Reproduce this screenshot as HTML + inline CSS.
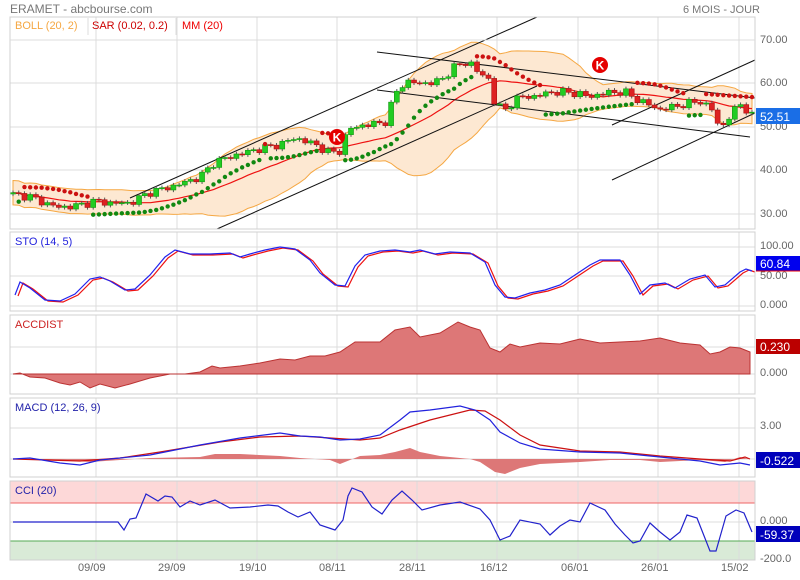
<!DOCTYPE html>
<html><head><meta charset="utf-8"><style>
body{margin:0;background:#fff;width:800px;height:580px;overflow:hidden;font-family:"Liberation Sans",sans-serif}
svg{display:block}
text{font-family:"Liberation Sans",sans-serif}
</style></head><body>
<svg id="s" width="800" height="580" xmlns="http://www.w3.org/2000/svg">
<g id="grid" stroke="#dcdcdc" stroke-width="1" fill="none"></g>
<g id="main"></g>
<g id="sub"></g>
<g id="frames" fill="none" stroke="#d0d0d0"></g>
<text x="10" y="13" font-size="12" fill="#777">ERAMET - abcbourse.com</text>
<text x="683" y="13" font-size="11" fill="#777">6 MOIS - JOUR</text>
<text x="15" y="29" font-size="11" fill="#f5a742">BOLL (20, 2)</text>
<text x="92" y="29" font-size="11" fill="#cc0000">SAR (0.02, 0.2)</text>
<text x="182" y="29" font-size="11" fill="#ee0000">MM (20)</text>
<line x1="88" y1="18" x2="88" y2="35" stroke="#ddd"/><line x1="176" y1="18" x2="176" y2="35" stroke="#ddd"/><line x1="10" y1="40" x2="755" y2="40" stroke="#ddd"/>
<g font-size="11" fill="#666">
<text x="760" y="43">70.00</text><text x="760" y="86">60.00</text><text x="760" y="130">50.00</text><text x="760" y="173">40.00</text><text x="760" y="217">30.00</text>
<text x="760" y="249">100.00</text><text x="760" y="279">50.00</text><text x="760" y="308">0.000</text>
<text x="760" y="376">0.000</text>
<text x="760" y="429">3.00</text>
<text x="760" y="524">0.000</text><text x="760" y="562">-200.0</text>
<text x="78" y="571">09/09</text><text x="158" y="571">29/09</text><text x="239" y="571">19/10</text><text x="319" y="571">08/11</text><text x="399" y="571">28/11</text><text x="480" y="571">16/12</text><text x="561" y="571">06/01</text><text x="641" y="571">26/01</text><text x="721" y="571">15/02</text>
</g>
<text x="15" y="245" font-size="11" fill="#2222dd">STO (14, 5)</text>
<text x="15" y="328" font-size="11" fill="#cc2222">ACCDIST</text>
<text x="15" y="411" font-size="11" fill="#2222aa">MACD (12, 26, 9)</text>
<text x="15" y="494" font-size="11" fill="#2222aa">CCI (20)</text>
<rect x="756" y="108" width="44" height="16" fill="#1a6ee6"/><text x="760" y="121" font-size="12" fill="#fff">52.51</text>
<rect x="756" y="256" width="44" height="15" fill="#0000ee"/><line x1="756" y1="271" x2="800" y2="271" stroke="#e00"/><text x="760" y="268" font-size="12" fill="#fff">60.84</text>
<rect x="756" y="339" width="44" height="15" fill="#bb0000"/><text x="760" y="351" font-size="12" fill="#fff">0.230</text>
<rect x="756" y="452" width="44" height="16" fill="#0000bb"/><text x="760" y="465" font-size="12" fill="#fff">-0.522</text>
<rect x="756" y="526" width="44" height="16" fill="#0000bb"/><text x="760" y="539" font-size="12" fill="#fff">-59.37</text>
<g id="top"></g>
</svg>
<script>
var NS="http://www.w3.org/2000/svg";
function el(p,t,a){var e=document.createElementNS(NS,t);for(var k in a)e.setAttribute(k,a[k]);document.getElementById(p).appendChild(e);return e;}
var VX=[96,177,257,337,417,497,578,658,739];
var panels=[[10,17,745,212],[10,232,745,79],[10,315,745,79],[10,398,745,79],[10,481,745,79]];
el('grid','rect',{x:10,y:481,width:745,height:22,fill:'#fdd8d8',stroke:'none'});
el('grid','rect',{x:10,y:541,width:745,height:19,fill:'#d9ead7',stroke:'none'});
panels.forEach(function(p){VX.forEach(function(x){el('grid','line',{x1:x,y1:p[1],x2:x,y2:p[1]+p[3]});});});
[83,127,170,214,247,276,306,347,374,428,459,522].forEach(function(y){el('grid','line',{x1:10,y1:y,x2:755,y2:y});});
el('grid','line',{x1:10,y1:503,x2:755,y2:503,stroke:'#ee6666'});
el('grid','line',{x1:10,y1:541,x2:755,y2:541,stroke:'#55aa55'});
panels.forEach(function(p){el('frames','rect',{x:p[0],y:p[1],width:p[2],height:p[3]});});
function Y(v){return 40+(70-v)*4.35;}
var K=[[13,34.5],[30,34],[45,32.5],[60,31.5],[80,32],[95,33],[110,32.5],[130,32.5],[150,35],[175,36.5],[200,38.5],[215,42],[235,43.5],[260,45],[280,46],[295,47.5],[315,46],[330,44],[340,44.5],[348,49.5],[365,50.5],[385,51],[395,57.5],[405,60.5],[420,60],[440,60.5],[455,64],[470,65],[480,62],[490,61],[495,55],[505,54],[520,57],[535,57],[550,58],[570,58],[590,57],[610,58],[625,58],[640,56],[660,54],[680,55],[700,56],[712,54],[720,49.5],[730,52.5],[740,55.5],[752,52.5]];
function interp(x){for(var i=1;i<K.length;i++){if(x<=K[i][0]){var a=K[i-1],b=K[i];return a[1]+(b[1]-a[1])*(x-a[0])/(b[0]-a[0]);}}return K[K.length-1][1];}
var n=130,C=[],X=[];
for(var i=0;i<n;i++){var x=13+i*(739/(n-1));X.push(x);C.push(interp(x)+Math.sin(i*2.3)*0.6+Math.cos(i*1.7)*0.4);}
var up=[],lo=[],ma=[];
for(var i=0;i<n;i++){var s=Math.max(0,i-19),w=C.slice(s,i+1),m=w.reduce(function(a,b){return a+b},0)/w.length;var v=Math.sqrt(w.reduce(function(a,b){return a+(b-m)*(b-m)},0)/w.length);v=Math.max(v*1.1,1.4);ma.push(m);up.push(m+2*v);lo.push(m-2*v);}
var d='';for(var i=0;i<n;i++)d+=(i?'L':'M')+X[i].toFixed(1)+' '+Y(up[i]).toFixed(1);for(var i=n-1;i>=0;i--)d+='L'+X[i].toFixed(1)+' '+Y(lo[i]).toFixed(1);
el('main','path',{d:d+'Z',fill:'#fde8d2',stroke:'#f5a742','stroke-width':1});
var pm='';for(var i=0;i<n;i++)pm+=(i?'L':'M')+X[i].toFixed(1)+' '+Y(ma[i]).toFixed(1);
el('main','path',{d:pm,fill:'none',stroke:'#ee1111','stroke-width':1.2});
[[130,198,537,17],[217,229,537,86],[377,52,755,98],[377,90,750,137],[612,125,755,60],[612,180,755,113]].forEach(function(l){el('main','line',{x1:l[0],y1:l[1],x2:l[2],y2:l[3],stroke:'#111','stroke-width':1});});
var H=[],L=[];
for(var i=0;i<n;i++){var o=i?C[i-1]:C[0]-0.3,c=C[i];var h=Math.max(o,c)+0.5,l=Math.min(o,c)-0.5;H.push(h);L.push(l);
var x=X[i],g=c>=o;el('main','line',{x1:x,y1:Y(h),x2:x,y2:Y(l),stroke:'#555','stroke-width':1});
var t=Y(Math.max(o,c)),b=Y(Math.min(o,c));el('main','rect',{x:x-2.5,y:t,width:5,height:Math.max(1,b-t),fill:g?'#22cc22':'#dd2222',stroke:g?'#119911':'#aa1111','stroke-width':0.6});}
var bull=true,af=0.02,ep=H[0],sar=L[0]-0.5;
for(var i=1;i<n;i++){sar=sar+af*(ep-sar);if(bull){if(L[i]<sar){bull=false;sar=ep;ep=L[i];af=0.02;}else if(H[i]>ep){ep=H[i];af=Math.min(0.2,af+0.02);}}else{if(H[i]>sar){bull=true;sar=ep;ep=H[i];af=0.02;}else if(L[i]<ep){ep=L[i];af=Math.min(0.2,af+0.02);}}
if(X[i]>704){el('main','circle',{cx:X[i],cy:Y(57.6-(X[i]-704)*0.015),r:2.2,fill:'#cc1111'});continue;}
el('main','circle',{cx:X[i],cy:Y(sar+(bull?-0.8:0.8)),r:2.2,fill:bull?'#118811':'#cc1111'});}
[[337,137],[600,65]].forEach(function(k){el('main','circle',{cx:k[0],cy:k[1],r:8,fill:'#e50000'});var t=el('main','text',{x:k[0],y:k[1]+4.5,'font-size':12,'font-weight':'bold',fill:'#fff','text-anchor':'middle'});t.textContent='K';});
function pl(p,pts,col,w){el(p,'polyline',{points:pts.map(function(a){return a.join(',')}).join(' '),fill:'none',stroke:col,'stroke-width':w||1.2});}
function sh(pts,dx,dy){return pts.map(function(a){return [a[0]+dx,a[1]+dy]});}
var sto=[[15,295],[20,282],[30,288],[45,300],[60,301],[75,294],[90,279],[100,277],[110,281],[125,290],[135,289],[150,275],[165,257],[175,250],[190,254],[210,254],[230,253],[240,257],[250,254],[265,250],[280,247],[295,249],[310,260],[320,273],[335,285],[345,286],[355,266],[365,255],[380,251],[395,250],[410,252],[420,250],[435,254],[450,252],[470,253],[485,262],[495,285],[505,297],[515,298],[530,293],[545,290],[560,285],[575,275],[590,265],[600,260],[620,260],[630,275],[640,294],[650,285],[665,283],[675,288],[690,279],[705,275],[715,287],[725,285],[740,272],[746,269],[752,271]];
pl('sub',sh(sto,3,1),'#ee1111');pl('sub',sto,'#2222ee');
var acc=[[13,374],[20,373],[30,377],[45,378],[60,383],[70,385],[80,382],[90,388],[100,384],[115,388],[130,384],[150,378],[170,374],[185,374],[200,372],[212,366],[220,368],[240,366],[260,363],[270,361],[280,359],[295,360],[310,356],[325,356],[340,352],[355,342],[380,342],[395,330],[410,327],[420,337],[440,333],[458,322],[470,327],[480,330],[490,348],[500,352],[510,344],[520,347],[540,343],[560,344],[580,339],[600,343],[620,342],[640,341],[660,338],[680,343],[700,345],[710,354],[720,352],[730,347],[740,348],[750,352]];
el('sub','path',{d:'M13,374 '+acc.map(function(a){return 'L'+a[0]+','+a[1]}).join(' ')+' L750,374Z',fill:'#dd7777',stroke:'#bb3333','stroke-width':1});
var hist=[[13,459],[60,460],[90,462],[120,460],[150,458],[200,457],[215,454],[240,454],[280,456],[300,458],[330,460],[340,464],[360,456],[380,455],[395,452],[410,448],[420,452],[440,456],[460,458],[470,459],[480,462],[495,472],[505,474],[520,468],[540,464],[580,462],[610,460],[640,460],[660,462],[700,460],[725,462],[740,457],[750,459]];
el('sub','path',{d:'M13,459 '+hist.map(function(a){return 'L'+a[0]+','+a[1]}).join(' ')+' L750,459Z',fill:'#dd7777',stroke:'none'});
pl('sub',[[13,459],[80,461],[120,458],[160,452],[220,442],[260,437],[300,436],[330,438],[360,440],[380,438],[400,430],[430,420],[470,410],[485,411],[500,420],[520,435],[540,445],[580,451],[620,452],[660,456],[700,459],[730,461],[745,457],[750,459]],'#cc1111');
pl('sub',[[13,459],[30,458],[60,463],[80,465],[100,460],[150,455],[200,445],[240,438],[280,433],[300,436],[320,437],[340,440],[360,439],[380,435],[400,420],[410,412],[430,410],[460,406],[475,410],[490,420],[500,432],[520,443],[540,449],[580,452],[620,453],[660,457],[680,459],[700,461],[720,465],[740,463],[750,465]],'#2222dd');
pl('sub',[[13,522],[118,522],[124,530],[130,519],[136,518],[146,494],[158,501],[165,496],[172,497],[180,507],[190,501],[200,505],[215,500],[230,508],[250,507],[268,505],[278,506],[288,512],[298,517],[310,512],[320,525],[335,530],[343,520],[348,496],[352,488],[362,492],[372,507],[382,514],[392,500],[402,491],[412,500],[422,510],[440,505],[460,502],[480,509],[490,520],[500,540],[510,536],[520,520],[540,524],[550,535],[560,526],[570,520],[580,522],[590,503],[605,510],[615,524],[625,535],[633,543],[640,541],[650,523],[660,532],[670,540],[680,532],[687,515],[697,518],[710,551],[716,551],[726,516],[736,510],[744,513],[752,532]],'#2222cc');
</script>
</body></html>
